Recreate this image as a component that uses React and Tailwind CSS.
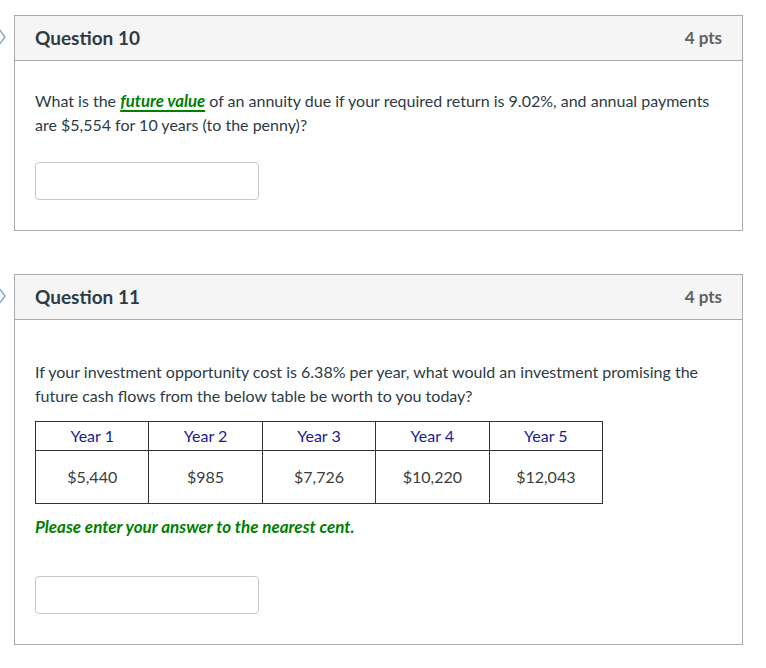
import React from "react";

function Chevron() {
  return (
    <div className="w-[14px] shrink-0 flex items-start">
      <svg width="14" height="46" viewBox="0 0 14 46" className="block">
        <path d="M-1 14 L5 22 L-1 30" fill="none" stroke="#7fa6cf" strokeWidth="1.4" />
      </svg>
    </div>
  );
}

function Header({ title }) {
  return (
    <div className="h-[45px] bg-[#f5f5f5] border-b border-[#aaaaaa] flex items-center justify-between pl-[20px] pr-[20px]">
      <span className="text-[19px] font-bold text-[#2d3b45]">{title}</span>
      <span className="text-[17px] font-bold text-[#5f6164]">4 pts</span>
    </div>
  );
}

function Input() {
  return <div className="w-[224px] h-[38px] border border-[#c8c8c8] rounded-[4px] bg-white" />;
}

const years = ["Year 1", "Year 2", "Year 3", "Year 4", "Year 5"];
const vals = ["$5,440", "$985", "$7,726", "$10,220", "$12,043"];

export default function App() {
  return (
    <div className="w-[766px] h-[668px] bg-white text-[#2d3b45] pt-[15px]" style={{ fontFamily: "Lato, 'Open Sans', sans-serif" }}>
      <div className="flex">
        <Chevron />
        <div className="w-[729px] border border-[#aaaaaa]">
          <Header title="Question 10" />
          <div className="pl-[20px] pt-[28px] pb-[30px]">
            <p className="text-[16px] leading-[24px] text-[#2d3b45] pr-[20px]">
              What is the{" "}
              <span className="text-[16.8px] text-[#008000] font-bold italic underline decoration-2 underline-offset-[3px]">future value</span>{" "}
              of an annuity due if your required return is 9.02%, and annual payments are $5,554 for 10 years (to the penny)?
            </p>
            <div className="mt-[25px]">
              <Input />
            </div>
          </div>
        </div>
      </div>

      <div className="flex mt-[43px]">
        <Chevron />
        <div className="w-[729px] border border-[#aaaaaa]">
          <Header title="Question 11" />
          <div className="pl-[20px] pt-[40px] pb-[30px]">
            <p className="text-[16px] leading-[24px] text-[#2d3b45] pr-[20px]">
              If your investment opportunity cost is 6.38% per year, what would an investment promising the future cash flows from the below table be worth to you today?
            </p>
            <table className="mt-[13px] w-[568px] border-collapse border border-[#333333] table-fixed text-[16px]">
              <tbody>
                <tr className="h-[29px]">
                  {years.map((y) => (
                    <td key={y} className="border border-[#333333] text-center text-[#1b1b8f] p-0">{y}</td>
                  ))}
                </tr>
                <tr className="h-[53px]">
                  {vals.map((v) => (
                    <td key={v} className="border border-[#333333] text-center text-[#3d3d3d] p-0">{v}</td>
                  ))}
                </tr>
              </tbody>
            </table>
            <p className="mt-[11px] text-[17px] leading-[24px] font-bold italic text-[#008000]">
              Please enter your answer to the nearest cent.
            </p>
            <div className="mt-[37px]">
              <Input />
            </div>
          </div>
        </div>
      </div>
    </div>
  );
}
